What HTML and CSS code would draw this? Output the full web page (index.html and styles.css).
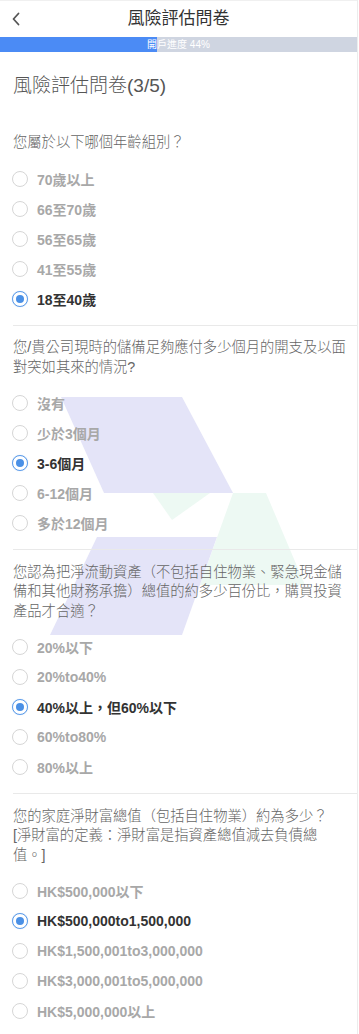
FILE: index.html
```html
<!DOCTYPE html>
<html lang="zh-Hant">
<head>
<meta charset="utf-8">
<title>風險評估問卷</title>
<link rel="stylesheet" href="styles.css">
</head>
<body>
<div class="page">
  <svg class="watermark" width="359" height="1034" viewBox="0 0 359 1034" aria-hidden="true">
    <polygon points="61,397 182,397 233,493 104,493" fill="#e4e4f8"/>
    <polygon points="153,493 210,493 172,520" fill="#edf9f3"/>
    <polygon points="233,493 266,493 305,585 200,585" fill="#edf9f3"/>
    <polygon points="97,537 217,537 182,635 50,635" fill="#e4e4f8"/>
  </svg>

  <header class="topbar">
    <svg class="back" width="10" height="14" viewBox="0 0 10 14" aria-hidden="true">
      <polyline points="7.5,1.5 2.5,7 7.5,12.5" fill="none" stroke="#555" stroke-width="1.8" stroke-linecap="round" stroke-linejoin="round"/>
    </svg>
    <h1 class="topbar-title">風險評估問卷</h1>
  </header>

  <div class="progress">
    <div class="progress-fill" style="width:44%"></div>
    <span class="progress-text">開戶進度 44%</span>
  </div>

  <h2 class="heading">風險評估問卷(3/5)</h2>

  <section class="q q-first">
    <p class="q-text">您屬於以下哪個年齡組別？</p>
    <ul class="opts">
      <li class="opt"><span class="radio"></span>70歲以上</li>
      <li class="opt"><span class="radio"></span>66至70歲</li>
      <li class="opt"><span class="radio"></span>56至65歲</li>
      <li class="opt"><span class="radio"></span>41至55歲</li>
      <li class="opt checked"><span class="radio"></span>18至40歲</li>
    </ul>
  </section>

  <section class="q">
    <p class="q-text">您/貴公司現時的儲備足夠應付多少個月的開支及以面對突如其來的情況?</p>
    <ul class="opts">
      <li class="opt"><span class="radio"></span>沒有</li>
      <li class="opt"><span class="radio"></span>少於3個月</li>
      <li class="opt checked"><span class="radio"></span>3-6個月</li>
      <li class="opt"><span class="radio"></span>6-12個月</li>
      <li class="opt"><span class="radio"></span>多於12個月</li>
    </ul>
  </section>

  <section class="q">
    <p class="q-text">您認為把淨流動資產（不包括自住物業、緊急現金儲備和其他財務承擔）總值的約多少百份比，購買投資產品才合適？</p>
    <ul class="opts">
      <li class="opt"><span class="radio"></span>20%以下</li>
      <li class="opt"><span class="radio"></span>20%to40%</li>
      <li class="opt checked"><span class="radio"></span>40%以上，但60%以下</li>
      <li class="opt"><span class="radio"></span>60%to80%</li>
      <li class="opt"><span class="radio"></span>80%以上</li>
    </ul>
  </section>

  <section class="q">
    <p class="q-text">您的家庭淨財富總值（包括自住物業）約為多少？<br>[淨財富的定義：淨財富是指資產總值減去負債總值。]</p>
    <ul class="opts">
      <li class="opt"><span class="radio"></span>HK$500,000以下</li>
      <li class="opt checked"><span class="radio"></span>HK$500,000to1,500,000</li>
      <li class="opt"><span class="radio"></span>HK$1,500,001to3,000,000</li>
      <li class="opt"><span class="radio"></span>HK$3,000,001to5,000,000</li>
      <li class="opt"><span class="radio"></span>HK$5,000,000以上</li>
    </ul>
  </section>
</div>
</body>
</html>
```

FILE: styles.css
```css
html, body {
  margin: 0;
  padding: 0;
  background: #ffffff;
}

body {
  font-family: "Liberation Sans", "Noto Sans CJK TC", sans-serif;
  color: #333;
}

.page {
  position: relative;
  z-index: 0;
  width: 358px;
  min-height: 1034px;
  box-sizing: border-box;
  border-right: 1px solid #ececec;
  overflow: hidden;
}

.watermark {
  position: absolute;
  left: 0;
  top: 0;
  z-index: -1;
  pointer-events: none;
}

.topbar {
  position: relative;
  height: 37px;
  display: flex;
  align-items: center;
  justify-content: center;
  border-top: 1px solid #f0f0f0;
  box-sizing: border-box;
}

.back {
  position: absolute;
  left: 11px;
  top: 11px;
}

.topbar-title {
  margin: 0;
  font-size: 17px;
  font-weight: normal;
  color: #333;
  line-height: 36px;
}

.progress {
  position: relative;
  height: 15px;
  width: 357px;
  background: #cfd5e1;
  display: flex;
  align-items: center;
  justify-content: center;
}

.progress-fill {
  position: absolute;
  left: 0;
  top: 0;
  bottom: 0;
  background: #4b8bf5;
}

.progress-text {
  position: relative;
  font-size: 10px;
  color: #ffffff;
  line-height: 15px;
}

.heading {
  margin: 20px 0 0 13px;
  font-size: 19px;
  font-weight: 300;
  line-height: 28px;
  color: #555;
}

.q {
  margin-left: 13px;
  padding: 12.5px 11px 11px 0;
  border-top: 1px solid #e9e9e9;
}

.q-first {
  border-top: none;
  padding-top: 33.25px;
}

.q-text {
  margin: 0 0 11px 0;
  font-size: 14.3px;
  font-weight: 300;
  line-height: 19.5px;
  color: #666;
}

.opts {
  list-style: none;
  margin: 0;
  padding: 0;
}

.opt {
  display: flex;
  align-items: center;
  height: 30px;
  font-size: 14px;
  font-weight: bold;
  color: #a8a8a8;
}

.radio {
  box-sizing: border-box;
  width: 16px;
  height: 16px;
  margin-left: -1px;
  margin-right: 9px;
  border: 1px solid #d6d6d6;
  border-radius: 50%;
  background: #fff;
  display: flex;
  align-items: center;
  justify-content: center;
  flex: none;
}

.opt.checked {
  color: #333;
}

.opt.checked .radio {
  border-color: #5b9bea;
  box-shadow: 0 0 1px rgba(74, 144, 226, 0.4);
}

.opt.checked .radio::after {
  content: "";
  width: 8px;
  height: 8px;
  border-radius: 50%;
  background: #4a90e6;
}
```
